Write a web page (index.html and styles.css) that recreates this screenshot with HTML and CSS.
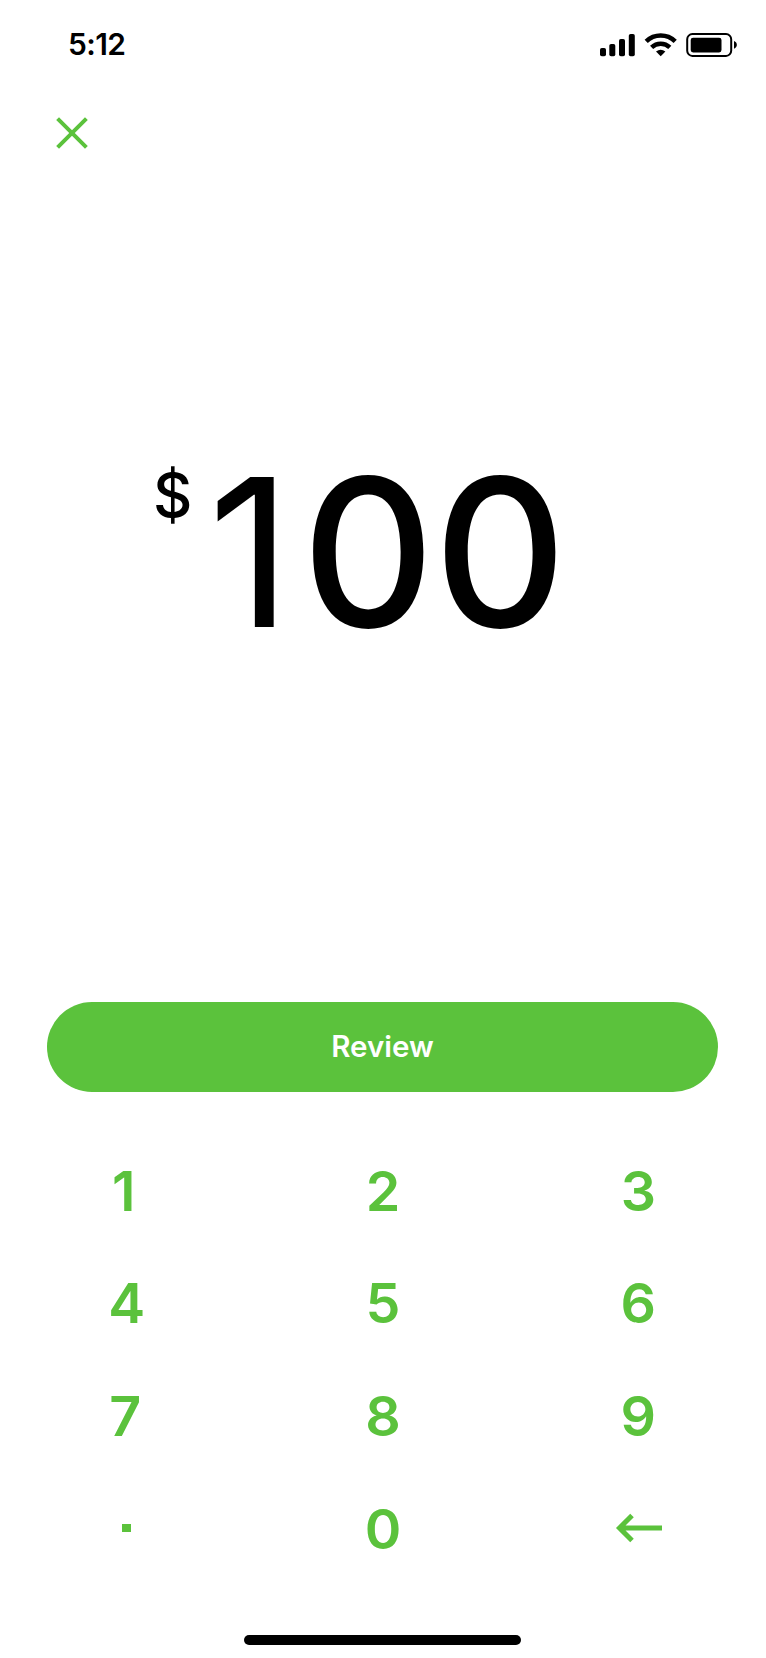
FILE: index.html
```html
<!DOCTYPE html>
<html lang="en">
<head>
    <meta charset="UTF-8">
    <meta name="viewport" content="width=device-width, initial-scale=1.0">
    <title>Enter Amount</title>
    <link rel="stylesheet" href="styles.css">
</head>
<body>

<div class="screen">

    <!-- Status Bar -->
    <header class="status-bar">
        <span class="time">5:12</span>
        <svg class="status-icons" width="138" height="26" viewBox="0 0 138 26">
            <rect x="0" y="16" width="6" height="8.2" rx="1.8" />
            <rect x="9.3" y="12" width="6" height="12.2" rx="1.8" />
            <rect x="19" y="7" width="6" height="17.2" rx="1.8" />
            <rect x="28.8" y="2" width="6" height="22.2" rx="1.8" />
            <path d="M46.2 9.3 A21 21 0 0 1 75.2 9.3" fill="none" stroke="#000" stroke-width="4.6" />
            <path d="M51.6 15.4 A13 13 0 0 1 69.8 15.4" fill="none" stroke="#000" stroke-width="4.4" />
            <path d="M56 19.6 Q60.7 15.8 65.4 19.6 L60.7 24.2 Z" />
            <rect x="87.2" y="2.1" width="44" height="21.8" rx="5.2" fill="none" stroke="#000" stroke-width="2" />
            <rect x="90.7" y="5.7" width="30.8" height="14.7" rx="2.4" />
            <path d="M134 9 C137.8 10.4 137.8 15.2 134 16.8 Z" />
        </svg>
    </header>

    <!-- Close Button -->
    <nav class="top-nav">
        <button class="close" aria-label="Close">
            <svg width="32" height="32" viewBox="0 0 32 32">
                <path d="M1.6 1.6 L30.4 30.4 M30.4 1.6 L1.6 30.4" fill="none" stroke="currentColor" stroke-width="4" />
            </svg>
        </button>
    </nav>

    <!-- Amount -->
    <main class="amount">
        <span class="currency">$</span>
        <span class="value"><span class="one">1</span>00</span>
    </main>

    <button class="review">Review</button>

    <!-- Keypad -->
    <section class="keypad">
        <button class="key-one">1</button>
        <button>2</button>
        <button>3</button>
        <button class="key-four">4</button>
        <button>5</button>
        <button>6</button>
        <button class="key-seven">7</button>
        <button>8</button>
        <button>9</button>
        <button class="key-dot" aria-label="Decimal point"><span class="dot"></span></button>
        <button>0</button>
        <button class="key-delete" aria-label="Delete">
            <svg width="48" height="30" viewBox="0 0 48 30">
                <path d="M47 15 H5 M17 2.5 L4.5 15 L17 27.5" fill="none" stroke="currentColor" stroke-width="5" />
            </svg>
        </button>
    </section>

    <div class="home-indicator"></div>

</div>

</body>
</html>
```
FILE: styles.css
```css
/* Amount entry screen */
* {
    box-sizing: border-box;
}
body {
    margin: 0;
    background-color: #fff;
    color: #000;
    font-family: Inter, "Liberation Sans", sans-serif;
}
button {
    padding: 0;
    border: none;
    background: none;
    color: #5bc23c;
    font-family: inherit;
    cursor: pointer;
}
svg {
    display: block;
}
.screen {
    display: flex;
    flex-direction: column;
    width: 766px;
    height: 1658px;
}

/* Status bar */
.status-bar {
    display: flex;
    justify-content: space-between;
    align-items: center;
    height: 90px;
    padding: 0 28px 0 68px;
}
.time {
    padding-bottom: 2px;
    font-size: 30px;
    font-weight: 600;
    letter-spacing: -0.6px;
}
.top-nav {
    height: 86px;
    padding: 27px 56px 0;
}
.close {
    display: block;
}

/* Amount */
.amount {
    display: flex;
    align-items: flex-start;
    height: 826px;
    padding: 253px 0 0 153px;
}
.currency {
    width: 55px;
    margin-top: 26px;
    font-size: 61px;
    font-weight: 500;
    line-height: 80px;
}
.value {
    font-size: 206px;
    font-weight: 500;
    letter-spacing: -1px;
    line-height: 246px;
}
.value .one {
    font-weight: 400;
    letter-spacing: 10px;
}
.review {
    height: 90px;
    margin: 0 48px 0 47px;
    padding-bottom: 2px;
    border-radius: 45px;
    background-color: #5bc23c;
    color: #fff;
    font-size: 29.5px;
    font-weight: 600;
}

/* Keypad */
.keypad {
    display: grid;
    grid-template-columns: repeat(3, 1fr);
    grid-auto-rows: 112.6px;
    margin-top: 42px;
}
.keypad button {
    display: flex;
    justify-content: center;
    align-items: center;
    font-size: 55.5px;
    font-weight: 600;
}
.keypad .key-one {
    padding-right: 8px;
}
.keypad .key-four,
.keypad .key-dot {
    padding-right: 2px;
}
.keypad .key-seven {
    padding-right: 5px;
}
.keypad .key-delete {
    padding-left: 2px;
}
.dot {
    width: 9px;
    height: 8px;
    background-color: #5bc23c;
}
.home-indicator {
    width: 277px;
    height: 10px;
    margin: auto 0 13px 244px;
    border-radius: 5px;
    background-color: #000;
}
```
